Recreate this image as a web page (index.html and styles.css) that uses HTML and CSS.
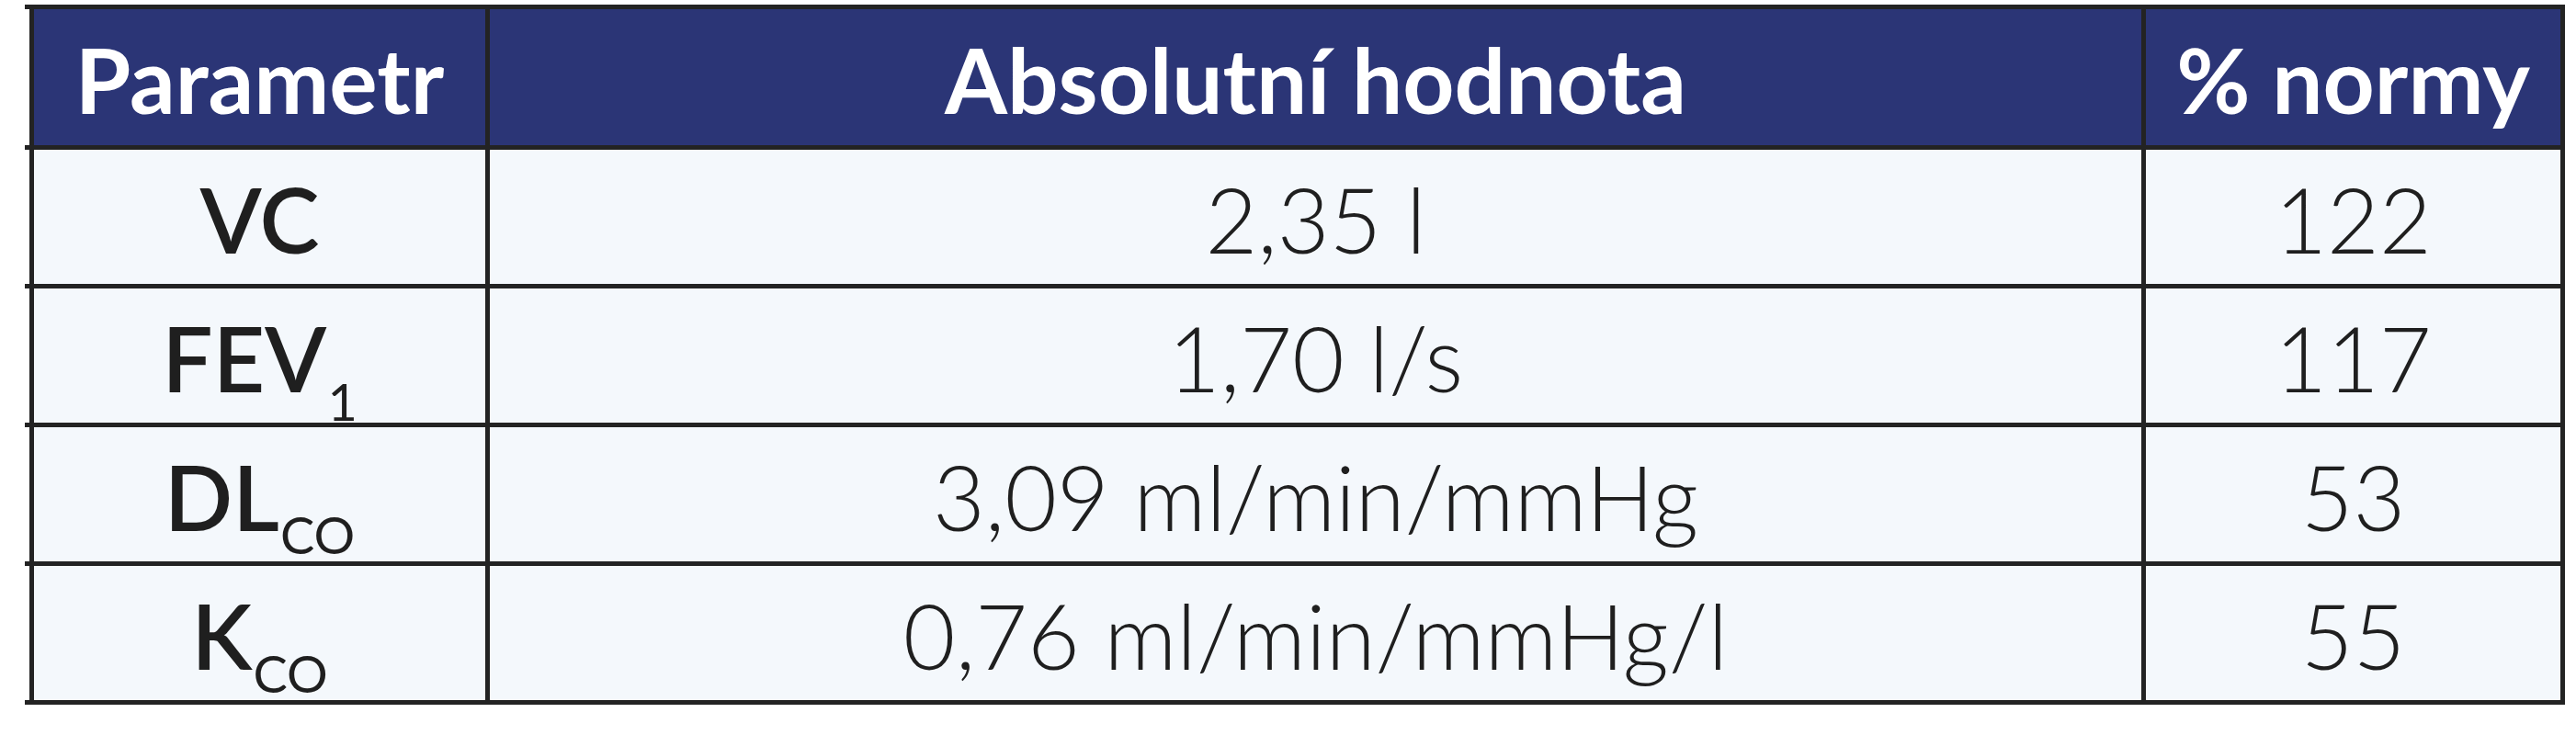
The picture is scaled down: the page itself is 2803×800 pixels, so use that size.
FILE: index.html
```html
<!DOCTYPE html>
<html lang="cs">
<head>
<meta charset="utf-8">
<title>Parametry</title>
<link rel="stylesheet" href="styles.css">
</head>
<body>
<div class="wrap">
  <div class="grid">
    <div class="cell head"><span>Parametr</span></div>
    <div class="cell head"><span>Absolutní hodnota</span></div>
    <div class="cell head"><span>% normy</span></div>

    <div class="cell param"><span>VC</span></div>
    <div class="cell value"><span>2,35 l</span></div>
    <div class="cell value"><span>122</span></div>

    <div class="cell param"><span>FEV<sub class="sub sub-low">1</sub></span></div>
    <div class="cell value"><span>1,70 l/s</span></div>
    <div class="cell value"><span>117</span></div>

    <div class="cell param"><span>DL<sub class="sub">CO</sub></span></div>
    <div class="cell value"><span>3,09 ml/min/mmHg</span></div>
    <div class="cell value"><span>53</span></div>

    <div class="cell param"><span>K<sub class="sub">CO</sub></span></div>
    <div class="cell value"><span>0,76 ml/min/mmHg/l</span></div>
    <div class="cell value"><span>55</span></div>
  </div>
</div>
</body>
</html>
```

FILE: styles.css
```css
html, body {
  margin: 0;
  padding: 0;
  background: #ffffff;
}

.wrap {
  padding: 5px 0 0 32px;
  width: max-content;
  /* short stubs where the horizontal rules overshoot the left edge */
  background-image:
    linear-gradient(#232323, #232323),
    linear-gradient(#232323, #232323),
    linear-gradient(#232323, #232323),
    linear-gradient(#232323, #232323),
    linear-gradient(#232323, #232323),
    linear-gradient(#232323, #232323);
  background-repeat: no-repeat;
  background-size: 5px 5px;
  background-position:
    27px 5px,
    27px 158px,
    27px 309px,
    27px 460px,
    27px 611px,
    27px 762px;
}

.grid {
  display: grid;
  grid-template-columns: 491px 1797px 451px;
  grid-template-rows: 148px repeat(4, 146px);
  gap: 5px;
  padding: 5px;
  background: #232323;
  width: max-content;
  font-family: Lato, "Liberation Sans", sans-serif;
  font-size: 98px;
  line-height: 1.2;
}

.cell {
  display: flex;
  align-items: center;
  justify-content: center;
  padding-top: 6px;
  box-sizing: border-box;
  white-space: nowrap;
  background: #f4f8fc;
  color: #1f1f1f;
}

.head {
  background: #2b3576;
  color: #ffffff;
  font-weight: 700;
}

.param {
  font-weight: 600;
}

.value {
  font-weight: 300;
}

.sub {
  font-size: 0.57em;
  font-weight: 400;
  vertical-align: -0.44em;
  line-height: 0;
  margin-left: 1px;
}

.sub-low {
  vertical-align: -0.56em;
}
```
